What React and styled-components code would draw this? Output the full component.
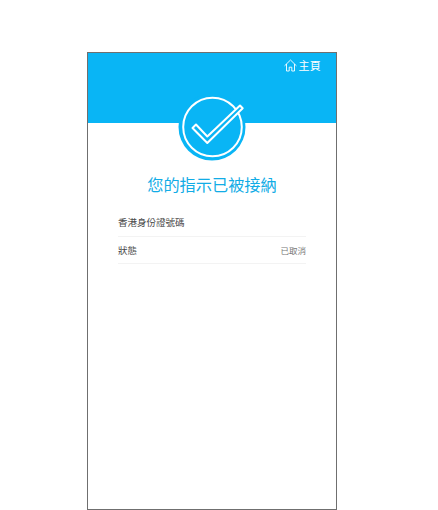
import React from 'react';
import styled, { createGlobalStyle } from 'styled-components';

const GlobalStyle = createGlobalStyle`
  html, body {
    margin: 0;
    padding: 0;
    background: #fff;
  }
  body {
    font-family: "Noto Sans CJK TC", "Liberation Sans", sans-serif;
  }
`;

const Page = styled.div`
  width: 438px;
  height: 510px;
  padding: 52px 0 0 87px;
  box-sizing: border-box;
  overflow: hidden;
`;

const Phone = styled.div`
  width: 250px;
  height: 458px;
  box-sizing: border-box;
  border: 1px solid #6f6f6f;
  background: #fff;
`;

const Hero = styled.div`
  position: relative;
  height: 70px;
  background: #09b5f5;
  display: flex;
  justify-content: flex-end;
  align-items: flex-start;
  padding: 4px 15px 0 0;
  box-sizing: border-box;
`;

const HomeLink = styled.a`
  display: flex;
  align-items: center;
  gap: 2px;
  color: #fff;
  font-size: 11px;
  line-height: 16px;
  letter-spacing: 0.2px;
`;

const Badge = styled.svg`
  position: absolute;
  left: 90px;
  top: 40px;
  width: 68px;
  height: 68px;
`;

const Content = styled.div`
  padding: 49px 30px 0 30px;
`;

const Title = styled.h1`
  margin: 0 0 13px;
  color: #12ace6;
  font-size: 16.2px;
  font-weight: 400;
  line-height: 24px;
  text-align: center;
`;

const Row = styled.div`
  display: flex;
  justify-content: space-between;
  align-items: center;
  height: 26.5px;
  border-bottom: 1px solid #f3f3f3;
  font-size: 9.5px;
  color: #4a4a4a;
`;

const Value = styled.span`
  font-size: 8.5px;
  color: #777;
`;

export default function App() {
  return (
    <Page>
      <GlobalStyle />
      <Phone>
        <Hero>
          <HomeLink>
            <svg width="13" height="13" viewBox="0 0 13 13" fill="none" stroke="#fff" strokeWidth="0.9" strokeLinejoin="round" strokeLinecap="round">
              <path d="M0.8 6.6 L6.5 1 L12.2 6.6" />
              <path d="M2.5 5.4 V12 H5.2 V8.2 H7.8 V12 H10.5 V5.4" />
            </svg>
            主頁
          </HomeLink>
          <Badge viewBox="0 0 68 68">
            <circle cx="34" cy="34" r="33.5" fill="#09b5f5" />
            <circle cx="34.5" cy="34" r="29.3" fill="none" stroke="#fff" strokeWidth="2" />
            <path
              d="M14.5 35 L18 31.5 L29.3 43.5 L62 12.5 L64.7 15.3 L29.3 50 Z"
              fill="#09b5f5"
              stroke="#fff"
              strokeWidth="2"
              strokeLinejoin="round"
            />
          </Badge>
        </Hero>
        <Content>
          <Title>您的指示已被接納</Title>
          <Row>
            <span>香港身份證號碼</span>
          </Row>
          <Row>
            <span>狀態</span>
            <Value>已取消</Value>
          </Row>
        </Content>
      </Phone>
    </Page>
  );
}
